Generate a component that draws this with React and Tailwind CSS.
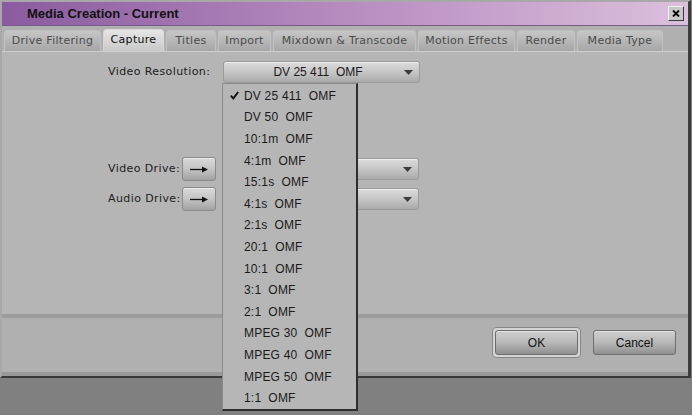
import React from "react";

const tabs = [
  { label: "Drive Filtering", w: 97 },
  { label: "Capture", w: 61, active: true },
  { label: "Titles", w: 50 },
  { label: "Import", w: 53 },
  { label: "Mixdown & Transcode", w: 143 },
  { label: "Motion Effects", w: 97 },
  { label: "Render", w: 58 },
  { label: "Media Type", w: 86 },
];

const items = [
  "DV 25 411  OMF",
  "DV 50  OMF",
  "10:1m  OMF",
  "4:1m  OMF",
  "15:1s  OMF",
  "4:1s  OMF",
  "2:1s  OMF",
  "20:1  OMF",
  "10:1  OMF",
  "3:1  OMF",
  "2:1  OMF",
  "MPEG 30  OMF",
  "MPEG 40  OMF",
  "MPEG 50  OMF",
  "1:1  OMF",
];

const labelFont = { fontFamily: '"DejaVu Sans", Verdana, sans-serif' };
const arialFont = { fontFamily: '"Liberation Sans", Arial, sans-serif' };

function Caret() {
  return (
    <svg width="9" height="5" viewBox="0 0 9 5" className="shrink-0">
      <path d="M0 0 H9 L4.5 5 Z" fill="#3c3c3c" />
    </svg>
  );
}

function Arrow() {
  return (
    <svg width="18" height="7" viewBox="0 0 18 7">
      <path d="M0 3.5 H14" stroke="#111" strokeWidth="1.3" />
      <path d="M12 0.5 L18 3.5 L12 6.5 Z" fill="#111" />
    </svg>
  );
}

function Check() {
  return (
    <svg width="9" height="9" viewBox="0 0 9 9">
      <path d="M0.8 4.6 L3.3 7.4 L8.2 1" stroke="#111" strokeWidth="1.9" fill="none" />
    </svg>
  );
}

function ArrowButton() {
  return (
    <div className="w-[34px] h-[24px] rounded-[3px] border border-[#8a8a8a] bg-gradient-to-b from-[#dadada] via-[#c4c4c4] to-[#a2a2a2] flex items-center justify-center shadow-[inset_0_1px_0_#ececec]">
      <Arrow />
    </div>
  );
}

function Dropdown({ children, className = "" }) {
  return (
    <div
      className={
        "h-[22px] rounded-[3px] border border-[#9a9a9a] bg-gradient-to-b from-[#dcdcdc] via-[#c6c6c6] to-[#aaaaaa] flex items-center pr-[6px] shadow-[inset_0_1px_0_#eeeeee] " +
        className
      }
    >
      <div className="flex-1 text-center text-[12px] text-[#1a1a1a] pl-[8px]" style={arialFont}>
        {children}
      </div>
      <Caret />
    </div>
  );
}

function Button({ children, focused }) {
  const inner = (
    <div className="w-[83px] h-[25px] rounded-[3px] border border-[#6e6e6e] bg-gradient-to-b from-[#cfcfcf] via-[#b8b8b8] to-[#909090] flex items-center justify-center text-[12px] text-[#111] shadow-[inset_0_1px_0_#e2e2e2]" style={arialFont}>
      {children}
    </div>
  );
  if (focused) {
    return (
      <div className="p-[2px] rounded-[4px] border border-[#888] bg-[#d4d4d4]">{inner}</div>
    );
  }
  return inner;
}

export default function App() {
  return (
    <div className="w-[692px] h-[415px] bg-[#808080] relative overflow-hidden">
      <div className="w-[691px] h-[378px] bg-[#b2b2b2] border-t-[2px] border-l-[2px] border-[#a8a8a8] border-r-[3px] border-r-[#3c3c3c] border-b-[2px] border-b-[#3a3a3a] flex flex-col">
        {/* Title bar */}
        <div className="h-[24px] bg-gradient-to-r from-[#8a5b9f] via-[#b68cbf] to-[#dcbfdd] flex items-center justify-between pl-[25px] pr-[4px] border-b border-[#7a5a88]">
          <span className="text-[13px] font-bold text-[#111]" style={arialFont}>
            Media Creation - Current
          </span>
          <div className="w-[16px] h-[15px] bg-[#c8c8c8] border border-t-[#efefef] border-l-[#efefef] border-r-[#3a3a3a] border-b-[#3a3a3a] flex items-center justify-center">
            <svg width="8" height="7" viewBox="0 0 8 7">
              <path d="M1 0.5 L7 6.5 M7 0.5 L1 6.5" stroke="#000" strokeWidth="1.8" />
            </svg>
          </div>
        </div>

        {/* Tabs */}
        <div className="flex items-end gap-[2px] pl-[2px] pt-[4px] h-[26px] bg-[#b0b0b0] border-b border-[#cfcfcf]">
          {tabs.map((t) => (
            <div
              key={t.label}
              style={{ width: t.w, ...labelFont }}
              className={
                "rounded-t-[4px] flex items-center justify-center text-[11px] tracking-[0.3px] " +
                (t.active
                  ? "h-[22px] bg-gradient-to-b from-[#e6e6e6] to-[#c8c8c8] text-[#111] border border-b-0 border-[#d8d8d8]"
                  : "h-[21px] bg-gradient-to-b from-[#c6c6c6] to-[#a6a6a6] text-[#4a4a4a] border border-b-0 border-[#c0c0c0]")
              }
            >
              {t.label}
            </div>
          ))}
        </div>

        {/* Panel */}
        <div className="h-[266px] bg-[#b5b5b5] border-b-[4px] border-[#9c9c9c] relative" style={labelFont}>
          <div className="flex items-center pt-[9px] pl-[106px]">
            <span className="w-[115px] text-[11px] text-[#1c1c1c] tracking-[0.4px]">Video Resolution:</span>
            <Dropdown className="w-[197px]">DV 25 411&nbsp;&nbsp;OMF</Dropdown>
          </div>
          <div className="flex items-center mt-[74px] pl-[106px]">
            <span className="w-[74px] text-[11px] text-[#1c1c1c] tracking-[0.4px]">Video Drive:</span>
            <ArrowButton />
            <Dropdown className="w-[197px] ml-[6px]"></Dropdown>
          </div>
          <div className="flex items-center mt-[6px] pl-[106px]">
            <span className="w-[74px] text-[11px] text-[#1c1c1c] tracking-[0.4px]">Audio Drive:</span>
            <ArrowButton />
            <Dropdown className="w-[197px] ml-[6px]"></Dropdown>
          </div>
        </div>

        {/* Footer */}
        <div className="flex-1 bg-[#b0b0b0] border-b-[4px] border-[#999] flex items-start justify-end gap-[12px] pt-[9px] pr-[12px]">
          <Button focused>OK</Button>
          <div className="pt-[3px]">
            <Button>Cancel</Button>
          </div>
        </div>
      </div>

      {/* Popup menu */}
      <div
        className="absolute left-[222px] top-[83px] w-[136px] h-[328px] bg-[#b6b6b6] border border-[#8c8c8c] border-r-[2px] border-r-[#2e2e2e] border-b-[2px] border-b-[#2e2e2e] pt-[1px]"
        style={arialFont}
      >
        {items.map((it, i) => (
          <div key={it} className="h-[21.6px] flex items-center text-[12px] text-[#1a1a1a] whitespace-pre tracking-[0.2px]">
            <span className="w-[21px] pl-[7px] flex items-center">{i === 0 ? <Check /> : null}</span>
            <span>{it}</span>
          </div>
        ))}
      </div>
    </div>
  );
}
